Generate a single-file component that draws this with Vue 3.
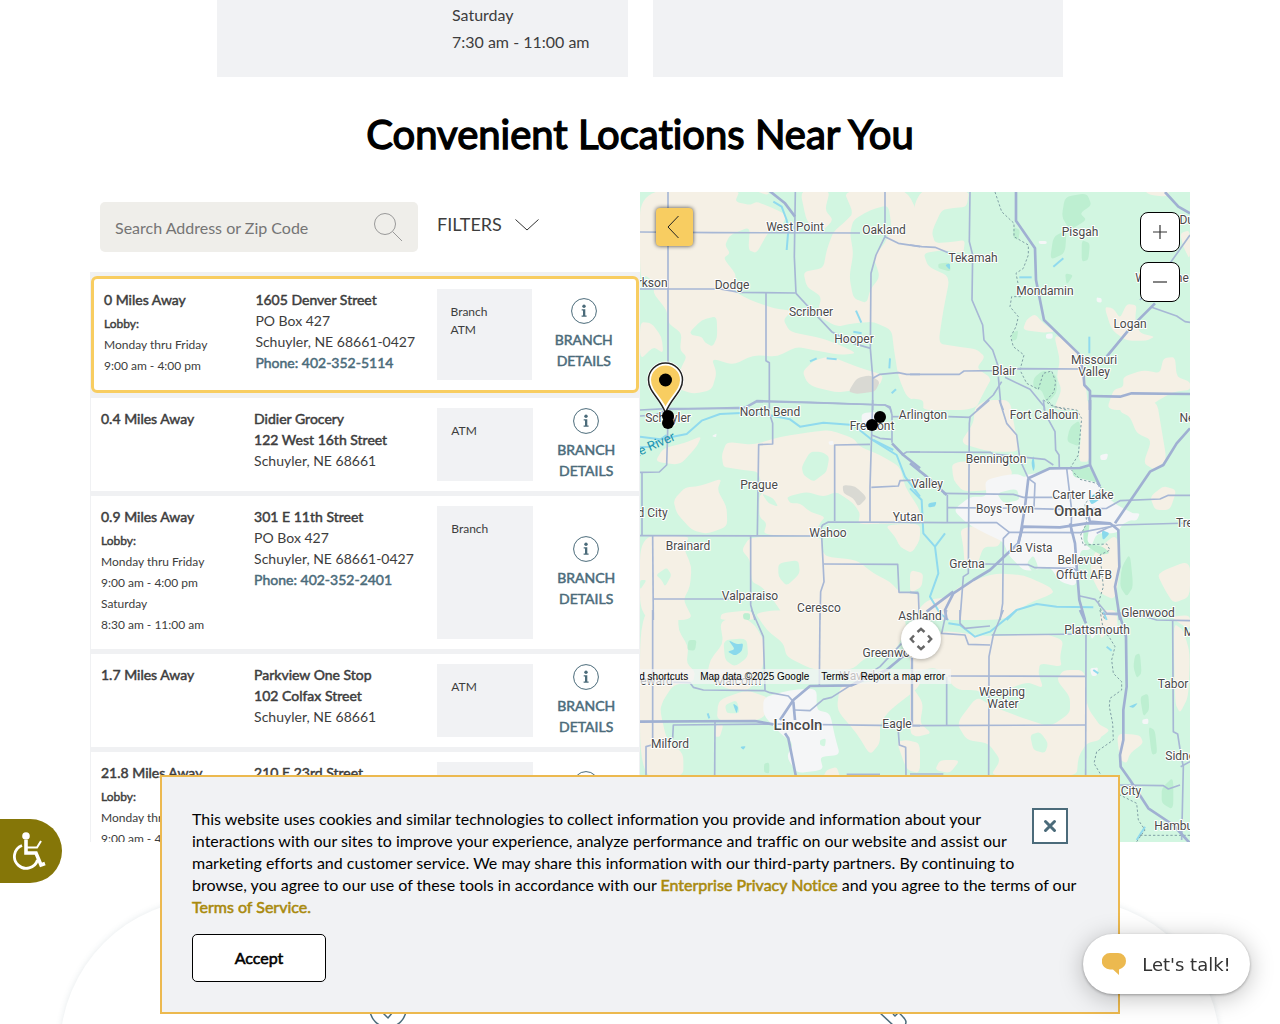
<script setup>
import { ref } from 'vue'

const query = ref('')

const branches = [
  { miles: '0', hours: ['Monday thru Friday', '9:00 am - 4:00 pm'], title: ['1605 Denver Street'], lines: ['PO Box 427', 'Schuyler, NE 68661-0427'], phone: '402-352-5114', services: ['Branch', 'ATM'], active: true },
  { miles: '0.4', hours: [], title: ['Didier Grocery', '122 West 16th Street'], lines: ['Schuyler, NE 68661'], services: ['ATM'] },
  { miles: '0.9', hours: ['Monday thru Friday', '9:00 am - 4:00 pm', 'Saturday', '8:30 am - 11:00 am'], title: ['301 E 11th Street'], lines: ['PO Box 427', 'Schuyler, NE 68661-0427'], phone: '402-352-2401', services: ['Branch'] },
  { miles: '1.7', hours: [], title: ['Parkview One Stop', '102 Colfax Street'], lines: ['Schuyler, NE 68661'], services: ['ATM'] },
  { miles: '21.8', hours: ['Monday thru Friday', '9:00 am - 4:00 pm'], title: ['210 E 23rd Street'], lines: [], services: [] },
]

// Map tiles: every tile is drawn at three units per pixel from its own origin.
// Area kinds: s = farmland, g = grassland, d = forest, u = urban, q = quarry, w = water.
const tiles = [
  {
    x: 640, y: 190,
    areas: [
      ['s', '0,0 300,0 285,35 330,45 350,35 400,55 440,75 425,110 385,125 350,190 325,180 330,110 270,135 255,165 270,190 250,205 290,255 275,300 330,330 400,355 455,362 430,390 450,425 545,445 600,465 650,490 600,495 520,480 470,470 410,500 340,495 280,525 215,505 230,550 215,600 160,612 110,595 120,540 140,500 120,480 125,430 85,400 80,360 40,310 45,280 20,258 0,262'],
      ['s', '0,395 35,400 65,440 70,490 40,470 0,510'],
      ['s', '610,0 840,0 840,640 800,620 775,560 762,480 755,420 700,395 640,400 590,410 530,375 545,320 500,290 490,245 550,235 560,180 580,125 610,100 640,70'],
      ['s', '480,0 570,0 555,60 580,90 540,130 500,95'],
      ['g', '640,90 690,60 745,45 755,110 735,160 700,200 720,260 690,300 680,340 640,325 628,260 640,190 630,130'],
      ['g', '150,425 185,390 230,378 232,440 218,470 195,458 185,440 155,435'],
      ['s', '488,545 520,512 570,498 650,530 730,555 720,585 650,600 590,608 520,590 500,575'],
      ['q', '625,605 650,565 690,555 720,575 705,605 650,612'],
      ['s', '340,0 390,8 380,15'],
    ],
    roads: ['84,6 84,560', '0,126 220,128 660,129', '466,6 463,200 468,310 500,345 575,425 640,460 692,475', '0,297 240,297 300,307 466,309', '378,309 378,512 388,518 388,632', '735,6 735,140 708,195 693,250 691,475 698,560 698,660', '735,140 775,160 840,170', '698,565 720,553 775,548 800,553 840,553', '0,660 80,656 310,655 350,632 510,637 735,645 750,655 755,668'],
    majors: ['385,0 435,40 465,80'],
    rivers: ['400,35 425,50 440,90 445,120 440,180', '510,514 530,505', '560,505 590,508', '648,362 664,398', '640,425 665,430', '750,505 748,535', '768,598 755,610'],
    borders: [],
  },
  {
    x: 910, y: 190,
    areas: [
      ['s', '0,0 178,0 170,50 125,55 95,60 65,125 75,160 130,155 165,150 160,190 100,180 40,190 55,230 120,260 100,360 85,460 130,468 200,478 225,500 200,535 245,565 225,600 195,660 0,660'],
      ['s', '338,420 350,388 375,372 400,400 435,425 400,428'],
      ['s', '432,435 470,450 520,500 525,560 535,660 430,660 455,600 440,560 450,510'],
      ['s', '583,350 610,355 630,385 650,342 680,345 675,390 690,430 735,440 710,452 650,452 605,420'],
      ['s', '640,560 700,540 750,550 760,505 795,500 800,560 840,575 840,600 790,605 730,640 720,660 590,660 610,600 640,590'],
      ['s', '810,130 840,120 840,210 820,170'],
      ['s', '700,0 780,0 770,20 720,15'],
      ['g', '0,625 40,630 40,660 0,660'],
      ['d', '465,20 530,10 545,45 510,70 530,90 480,120 455,80'],
      ['d', '430,140 470,120 465,190 420,210'],
      ['d', '515,150 540,160 535,210 515,215'],
      ['d', '465,250 490,255 470,285'],
      ['d', '370,565 400,540 440,555 440,610 410,640 395,600 370,595'],
      ['d', '310,110 330,120 325,150 310,145'],
      ['d', '305,430 325,420 320,450 305,452'],
      ['d', '85,220 120,218 122,245 85,235'],
      ['w', '105,225 120,220 120,240'],
      ['u', '385,153 410,153 410,162 388,162'],
      ['u', '560,322 575,325 575,338 560,336'],
      ['u', '408,432 428,430 428,446 408,446'],
    ],
    roads: ['180,6 178,155 188,195 186,330 218,405 222,450 248,480 265,530', '0,165 35,170 75,172 115,188', '0,553 148,553 162,543 250,542 330,536 520,537', '265,560 272,640 280,660', '285,562 360,598 403,650 403,660', '275,575 250,615 200,660', '840,135 780,220 690,330', '725,352 800,378 825,395 840,397'],
    majors: ['318,6 318,92 375,175 378,270 402,390 505,490 520,545 523,585 540,603 540,660', '540,618 630,620 665,610 840,612', '765,6 805,50 840,70', '735,340 660,415 590,500'],
    rivers: ['430,230 460,205', '328,262 365,262', '538,440 538,490'],
    borders: ['255,6 275,65 312,100 312,140 355,165 355,195 340,235 318,250 325,285 335,320 305,320 300,350 325,380 318,410 302,440 310,470 342,495 330,540 350,580 385,598 400,550 425,543 437,575 432,605 410,630 430,648 470,660'],
  },
  {
    x: 640, y: 400,
    areas: [
      ['s', '245,165 260,125 340,135 420,110 520,95 570,90 640,115 660,140 720,165 780,200 795,260 840,330 840,370 660,372 650,400 545,410 370,405 380,370 358,350 358,290 370,275 355,215 310,210 275,205 250,200'],
      ['g', '485,200 510,155 545,155 568,170 560,215 540,230 520,245 490,225'],
      ['g', '440,290 500,275 550,290 590,275 640,310 660,340 655,370 690,375 735,370 800,420 840,420 840,585 780,575 740,545 690,520 650,490 665,450 640,430 600,460 550,460 530,430 525,400 540,370 555,350 510,335 480,310 450,310'],
      ['q', '608,255 645,258 682,293 655,320 640,295 610,280'],
      ['s', '735,375 840,370 840,420 815,460 780,440 765,410'],
      ['s', '100,300 135,262 180,258 245,235 232,270 260,320 262,380 200,402 155,390 110,340'],
      ['s', '45,185 70,145 130,130 185,108 170,140 120,195'],
      ['s', '0,408 150,408 130,440 155,500 150,560 130,600 160,660 0,660'],
      ['g', '48,525 80,502 95,525 75,560 65,540'],
      ['g', '0,540 20,540 0,570'],
      ['s', '330,410 545,410 545,450 560,470 650,480 700,520 750,545 780,578 840,582 840,660 440,660 400,600 365,560 335,545 330,480 305,450'],
      ['g', '415,490 475,480 480,520 440,558 415,530'],
      ['s', '245,640 330,630 350,660 240,660'],
      ['g', '365,280 400,295 415,320 385,310'],
      ['u', '665,40 710,35 715,75 665,70'],
      ['d', '310,640 330,640 330,660 310,660'],
      ['u', '565,125 580,122 580,135 568,135'],
      ['u', '215,108 230,100 228,112'],
    ],
    roads: ['0,48 45,45 85,28 320,22 350,5 510,8 735,15 750,20 756,45 756,128', '84,60 80,195 58,216 0,217', '6,217 6,405', '388,0 388,40 398,70 398,132 356,134 352,405', '698,0 696,70 690,260 690,365', '584,363 584,135 690,133', '0,407 530,408 548,375 565,366 840,367', '545,408 552,545 542,575 540,660', '38,408 40,660', '40,597 270,597', '332,408 332,615 345,660', '552,492 773,493 777,577 835,577', '694,262 775,258 780,242 840,240', '785,165 800,156 840,156', '756,50 780,50', '695,105 720,115 755,118'],
    majors: ['756,130 790,165 840,205'],
    rivers: ['0,110 60,118 140,102 185,62 240,42 320,38 370,42 450,58 480,80 550,68 640,75 690,115 770,165 795,230 840,290', '80,105 30,140 0,142', '700,120 760,150'],
    borders: [],
  },
  {
    x: 910, y: 400,
    areas: [
      ['s', '195,20 230,0 300,0 315,90 330,155 240,155 150,130 190,70'],
      ['s', '500,0 540,0 540,185 505,185 515,90'],
      ['s', '630,0 740,0 755,90 770,180 735,210 700,190 725,120 680,100 660,50 630,35'],
      ['s', '125,185 290,180 310,225 250,270 160,275 130,240'],
      ['s', '150,385 240,372 280,405 265,440 220,440 200,500 165,510 160,440'],
      ['s', '145,560 250,520 340,525 420,560 432,580 350,612 290,660 0,660 50,600 120,590'],
      ['s', '0,510 40,520 35,560 0,580'],
      ['s', '720,290 760,258 800,270 780,330 735,330'],
      ['s', '550,460 620,400 632,500 615,600 570,580 540,520'],
      ['s', '740,520 840,480 840,590 790,610 765,570'],
      ['u', '225,240 300,222 355,225 440,205 530,212 560,250 610,310 690,350 640,370 620,400 560,400 540,450 510,450 500,560 450,545 420,500 345,515 295,465 280,425 225,400 170,370 130,330 180,290 230,290'],
      ['g', '300,180 350,190 350,235 300,210'],
      ['g', '260,280 320,265 330,300 280,310'],
      ['d', '480,80 510,60 510,140 470,125'],
      ['d', '485,200 540,200 570,250 530,240 490,230'],
      ['d', '520,380 540,370 530,430 580,440 600,460 570,465 520,430'],
      ['d', '635,500 660,460 670,560 650,590 630,560'],
      ['g', '350,490 370,465 385,500 370,520'],
      ['w', '575,390 600,400 578,422'],
      ['w', '55,310 80,305 75,320 55,322'],
      ['w', '535,295 570,270 580,290 545,315'],
      ['w', '370,165 375,200 370,215 364,190'],
      ['u', '570,165 595,160 590,180 572,180'],
      ['u', '660,340 690,340 680,362 655,360'],
    ],
    roads: ['0,156 240,157 250,162 405,178 430,195', '115,50 180,52 178,70 175,520 160,530 150,660', '178,52 238,0', '268,0 290,70 320,105 330,180 355,235 375,250 372,320', '400,0 405,40 435,95 437,150 447,165 448,205', '0,367 110,368 260,368 298,397 280,415 278,610 270,660', '100,280 310,283 340,292 450,292', '112,285 112,368', '112,323 340,325 460,328 590,325 630,302 750,297 775,286 840,286', '298,397 510,398 625,375 840,369', '220,492 355,494 375,503 490,505 500,512', '470,205 485,330 483,400', '510,588 555,598 590,640 640,640', '560,400 590,385 615,375', '0,577 25,580 28,660'],
    majors: ['0,190 50,230 110,285', '325,430 338,380 450,382 530,370 600,370 625,390 628,500 615,560 630,660', '355,235 345,320 332,400 325,430 240,510 190,540 130,580 105,630 110,660', '355,235 420,205 510,204 540,195 540,0', '540,195 570,260', '615,370 720,215 760,195 800,130 840,85', '480,370 495,430 500,500 508,600 525,660', '130,575 50,635', '530,330 540,365 600,370'],
    rivers: ['0,265 35,300 40,400 75,440 85,520 60,590 90,640 115,660', '105,400 75,440', '290,660 320,630 380,612 440,620 550,622', '580,635 590,660'],
    borders: ['400,0 430,20 500,30 515,55 508,130 505,165 480,205 510,238 560,250 575,265 525,310 530,370 512,405 520,435 590,432 600,450 570,465 580,560 565,610 585,660'],
  },
  {
    x: 640, y: 610,
    areas: [
      ['s', '0,0 115,0 115,60 145,110 140,160 165,185 160,215 100,225 70,270 60,300 80,390 130,430 130,500 0,500'],
      ['s', '240,35 300,15 345,45 375,100 370,170 330,240 270,240 200,205 210,150 250,100'],
      ['g', '250,90 320,85 325,140 285,170 255,150'],
      ['s', '340,0 790,0 800,60 760,130 680,140 635,180 520,180 440,140 430,100 380,60'],
      ['s', '600,225 700,215 840,180 840,230 750,300 720,340 720,400 690,435 650,370 590,300'],
      ['s', '235,270 320,240 390,265 370,330 230,335'],
      ['g', '255,285 290,270 300,310 260,310'],
      ['s', '770,395 800,390 840,400 840,490 800,480'],
      ['s', '230,340 250,345 240,380 225,380'],
      ['u', '370,262 450,240 530,235 530,300 570,310 585,380 600,435 540,440 550,480 470,490 440,440 460,400 420,370 370,315'],
      ['w', '265,90 290,103 310,100 305,125 285,137 262,125 285,118'],
      ['w', '278,280 295,290 290,312'],
      ['w', '300,410 318,408 310,420'],
      ['d', '145,90 170,90 165,122 142,120'],
      ['d', '310,10 330,12 328,30 310,28'],
      ['g', '540,390 558,385 555,410 540,405'],
      ['d', '372,460 388,458 388,490 372,488'],
      ['s', '560,480 590,470 600,500 550,500'],
    ],
    roads: ['38,0 38,390', '335,0 370,80 375,240', '540,10 538,225', '0,215 150,218 160,232 190,240 375,242 390,248 445,258 460,275', '98,385 100,345 400,342 720,346 840,347', '225,333 224,500', '18,500 18,410 35,405', '465,300 510,302 550,268 575,262 720,170 790,95', '775,365 778,405 797,412 798,500', '817,110 817,345', '620,493 720,493'],
    majors: ['0,335 345,333 400,343', '420,330 460,270 510,228 635,226 740,180 800,130', '460,275 465,330', '435,370 445,385 468,500'],
    rivers: ['203,310 208,325'],
    borders: [],
  },
  {
    x: 910, y: 610,
    areas: [
      ['s', '90,60 240,80 400,70 460,90 450,140 455,170 390,160 385,190 400,235 350,215 240,260 200,240 140,240 80,170 0,190 0,100 60,110'],
      ['s', '0,220 40,280 30,340 65,370 20,380 0,370'],
      ['s', '140,340 200,260 250,290 340,325 420,350 480,310 480,260 440,210 460,180 525,180 530,290 580,360 570,390 530,400 505,440 500,500 240,500 272,450 235,400 170,390'],
      ['g', '360,375 390,365 415,400 405,430 370,420'],
      ['s', '530,290 560,340 600,360 575,380 530,400'],
      ['s', '620,370 690,375 700,400 660,430 650,460 630,450'],
      ['s', '75,480 90,450 150,450 120,490'],
      ['s', '790,40 820,60 840,130 835,260 810,310 795,280'],
      ['s', '780,20 840,15 840,60'],
      ['s', '570,0 620,0 625,80 600,60 570,90'],
      ['d', '675,135 690,130 695,190 680,205 670,170'],
      ['d', '690,260 715,250 718,300 700,320'],
      ['d', '715,350 735,360 742,430 725,435'],
      ['d', '755,535 790,500 790,600 755,580'],
      ['u', '540,175 565,172 560,198 545,198'],
      ['u', '540,60 570,55 545,90'],
      ['u', '697,328 715,326 715,342 697,342'],
      ['w', '655,290 685,278 670,294'],
    ],
    roads: ['110,0 95,70 165,75 175,103 240,105', '245,75 530,72', '280,0 250,75 237,140 236,500', '115,198 525,199', '110,200 110,345', '0,347 525,345', '528,60 527,500', '580,12 700,18 740,30 840,32', '788,32 790,365 803,372 812,430 820,470 815,690', '0,492 100,492', '630,525 760,527 775,537 810,525', '812,470 840,455', '150,0 150,40 165,55 240,48', '5,140 5,345'],
    majors: ['625,0 648,80 650,230 640,300 640,390 630,435 632,470 660,510 715,595 790,645 840,700', '510,0 528,40'],
    rivers: ['115,40 150,45 195,80 240,65 290,25 320,0', '550,180 565,190', '590,110 605,122', '705,650 680,690'],
    borders: ['570,0 580,60 600,85 615,110 605,150 610,190 635,215 635,240 600,265 598,290 608,340 610,390 560,425 552,460 570,490 630,555 680,580 685,630 705,660 680,695', '690,676 840,676'],
  },
]

const labels = [
  ['West Point', 795, 227], ['Oakland', 884, 230], ['Tekamah', 973, 258], ['Pisgah', 1080, 232], ['Dun', 1190, 220],
  ['Woodbine', 1162, 278], ['Mondamin', 1045, 291], ['Logan', 1130, 324], ['Clarkson', 644, 283], ['Dodge', 732, 285],
  ['Scribner', 811, 312], ['Hooper', 854, 339], ['Missouri', 1094, 360], ['Valley', 1094, 372], ['Blair', 1004, 371],
  ['North Bend', 770, 412], ['Schuyler', 668, 418], ['Fremont', 872, 426], ['Arlington', 923, 415], ['Fort Calhoun', 1044, 415],
  ['Bennington', 996, 459], ['Prague', 759, 485], ['Valley', 927, 484], ['Carter Lake', 1083, 495], ['Boys Town', 1005, 509],
  ['Yutan', 908, 517], ['David City', 641, 513], ['Wahoo', 828, 533], ['Brainard', 688, 546], ['La Vista', 1031, 548],
  ['Gretna', 967, 564], ['Bellevue', 1080, 560], ['Offutt AFB', 1084, 575], ['Valparaiso', 750, 596], ['Ceresco', 819, 608],
  ['Ashland', 920, 616], ['Glenwood', 1148, 613], ['Plattsmouth', 1097, 630], ['Greenwood', 893, 653], ['Seward', 653, 681],
  ['Malcolm', 738, 681], ['Waverly', 860, 676], ['Weeping', 1002, 692], ['Water', 1003, 704], ['Tabor', 1173, 684],
  ['Eagle', 897, 724], ['Milford', 670, 744], ['Neola', 1195, 418], ['Treynor', 1196, 523], ['Malvern', 1205, 632],
  ['Sidney', 1183, 756], ['Nebraska City', 1104, 791], ['Hamburg', 1179, 826],
]

// Closes an outline and softens each of its corners over a third of the adjoining sides.
function blob(text) {
  const p = text.split(' ').map((s) => s.split(',').map(Number))
  const part = (a, b) => `${a[0] + (b[0] - a[0]) * 0.3} ${a[1] + (b[1] - a[1]) * 0.3}`
  return (
    p
      .map((pt, i) => {
        const prev = p[(i + p.length - 1) % p.length]
        const next = p[(i + 1) % p.length]
        return `${i ? 'L' : 'M'}${part(pt, prev)}Q${pt[0]} ${pt[1]} ${part(pt, next)}`
      })
      .join('') + 'Z'
  )
}
</script>

<template>
  <div class="page">
    <section class="hours">
      <div class="hours-card">
        <p>Saturday<br />7:30 am - 11:00 am</p>
      </div>
      <div class="hours-card"></div>
    </section>

    <h2 class="heading faux">Convenient Locations Near You</h2>

    <section class="locator">
      <div class="finder">
        <form class="search" @submit.prevent>
          <div class="search-box">
            <input v-model="query" type="text" aria-label="Search Address or Zip Code" placeholder="Search Address or Zip Code" />
            <button type="submit" class="plain" aria-label="Search">
              <svg width="30" height="30" viewBox="0 0 30 30" fill="none" stroke="#999"><circle cx="12" cy="12" r="10.500" /><path d="M19.500 19.500L29 29" /></svg>
            </button>
          </div>
          <button type="button" class="plain filters">
            FILTERS
            <svg width="24" height="12" viewBox="0 0 24 12" fill="none" stroke="#333"><path d="M0.500 0.500L12 11L23.500 0.500" /></svg>
          </button>
        </form>

        <ul class="list">
          <li v-for="b in branches" :key="b.miles" class="branch" :class="{ active: b.active }">
            <div class="distance">
              <strong class="faux">{{ b.miles }} Miles Away</strong>
              <div v-if="b.hours.length" class="lobby">
                <strong class="faux">Lobby:</strong>
                <span v-for="h in b.hours" :key="h">{{ h }}</span>
              </div>
            </div>
            <address>
              <strong v-for="t in b.title" :key="t" class="faux">{{ t }}</strong>
              <span v-for="l in b.lines" :key="l">{{ l }}</span>
              <a v-if="b.phone" class="faux" :href="'tel:' + b.phone">Phone: {{ b.phone }}</a>
            </address>
            <div class="services">
              <span v-for="s in b.services" :key="s">{{ s }}</span>
            </div>
            <a class="details faux" href="#details">
              <svg width="26" height="26" viewBox="0 0 26 26"><circle cx="13" cy="13" r="12.400" fill="none" stroke="#4b6b7a" /><circle cx="13" cy="8.300" r="1.700" fill="#4b6b7a" /><path d="M10.700 11.200h3.600v6.300h1.300v1.200h-5v-1.200h1.400v-5.100h-1.300z" fill="#4b6b7a" /></svg>
              <span>BRANCH</span><span>DETAILS</span>
            </a>
          </li>
        </ul>
      </div>

      <div class="map">
        <svg class="canvas" viewBox="640 192 550 650" preserveAspectRatio="xMinYMin slice" role="img" aria-label="Map of branches">
          <rect x="640" y="192" width="550" height="650" fill="#d2f6e1" />
          <g v-for="(t, i) in tiles" :key="'a' + i" :transform="`translate(${t.x} ${t.y}) scale(.33333)`">
            <path v-for="(a, j) in t.areas" :key="j" :d="blob(a[1])" :class="a[0]" />
          </g>
          <g v-for="(t, i) in tiles" :key="'r' + i" :transform="`translate(${t.x} ${t.y}) scale(.33333)`" fill="none" stroke-linejoin="round">
            <polyline v-for="(r, j) in t.rivers" :key="'w' + j" :points="r" class="river" />
            <polyline v-for="(r, j) in t.borders" :key="'b' + j" :points="r" class="border" />
            <polyline v-for="(r, j) in t.roads" :key="'r' + j" :points="r" class="road" />
            <polyline v-for="(r, j) in t.majors" :key="'m' + j" :points="r" class="major" />
          </g>
          <g class="labels">
            <text v-for="(l, i) in labels" :key="i" :x="l[1]" :y="l[2] + 4">{{ l[0] }}</text>
            <text class="city" x="1078" y="516">Omaha</text>
            <text class="city" x="798" y="730">Lincoln</text>
            <text class="water" x="646" y="453" transform="rotate(-24 646 453)">Platte River</text>
          </g>
          <path d="M665.500 411C661 398 649 392 649 380a16.500 16.500 0 0 1 33 0C682 392 670 398 665.500 411z" fill="#f8cd61" stroke="#fff" stroke-width="4" />
          <path d="M665.500 413C660 398 648.500 392 648.500 380a17 17 0 0 1 34 0C682.500 392 671 398 665.500 413z" fill="none" stroke="#222" stroke-width="1.500" />
          <circle cx="665.500" cy="380" r="6.500" /><circle cx="668" cy="416" r="6" /><circle cx="668" cy="423" r="6" />
          <circle cx="880" cy="417" r="6" /><circle cx="872" cy="425" r="6" />
        </svg>

        <button class="back" aria-label="Collapse list"><svg width="12" height="24" viewBox="0 0 12 24" fill="none" stroke="#222"><path d="M11.500 1L1 12L11.500 23" /></svg></button>
        <div class="zoom">
          <button aria-label="Zoom in"><svg width="14" height="14" viewBox="0 0 14 14" stroke="#333" stroke-width="1.200"><path d="M0 7h14M7 0v14" /></svg></button>
          <button aria-label="Zoom out"><svg width="14" height="14" viewBox="0 0 14 14" stroke="#333" stroke-width="1.200"><path d="M0 7h14" /></svg></button>
        </div>
        <button class="pan" aria-label="Map camera controls">
          <svg width="24" height="24" viewBox="0 0 24 24" fill="none" stroke="#666" stroke-width="2.400"><path d="M8.500 5L12 1.800L15.500 5M8.500 19L12 22.200L15.500 19M5 8.500L1.800 12L5 15.500M19 8.500L22.200 12L19 15.500" /></svg>
        </button>
        <div class="credits">
          <span>Keyboard shortcuts</span><span>Map data ©2025 Google</span><span>Terms</span><span>Report a map error</span>
        </div>
      </div>
    </section>

    <section class="products">
      <svg width="38" height="38" viewBox="0 0 38 38" fill="none" stroke="#4b6b7a" stroke-width="1.500"><circle cx="19" cy="19" r="18" /><path d="M10 19L19 28L28 17" /></svg>
      <svg width="38" height="38" viewBox="0 0 38 38" fill="none" stroke="#4b6b7a" stroke-width="1.500"><path d="M5 22L20 36Q31 41 32 32Q32 29 24 22M19 24l2 2l4-4" /></svg>
    </section>

    <button class="access" aria-label="Accessibility options">
      <svg width="33" height="38" viewBox="0 0 33 38" fill="none" stroke="#fff">
        <circle cx="13" cy="4" r="3.800" fill="#fff" stroke="none" />
        <path d="M13 8V21H23L28 33L32 31.500" stroke-width="3.600" />
        <path d="M13 15.500H24L28 9" stroke-width="2" />
        <path d="M9 13.500A11.800 11.800 0 1 0 24.500 28" stroke-width="2.800" />
      </svg>
    </button>

    <aside class="cookies">
      <button class="close" aria-label="Close"><svg width="14" height="14" viewBox="0 0 14 14" stroke="#4b6b7a" stroke-width="3" stroke-linecap="round"><path d="M2.500 2.500L11.500 11.500M11.500 2.500L2.500 11.500" /></svg></button>
      <p>
        This website uses cookies and similar technologies to collect information you provide and information about your
        interactions with our sites to improve your experience, analyze performance and traffic on our website and assist our
        marketing efforts and customer service. We may share this information with our third-party partners. By continuing to
        browse, you agree to our use of these tools in accordance with our <a class="faux" href="#privacy">Enterprise Privacy Notice</a>
        and you agree to the terms of our <a class="faux" href="#terms">Terms of Service.</a>
      </p>
      <button class="accept faux">Accept</button>
    </aside>

    <button class="chat">
      <svg width="24" height="22" viewBox="0 0 24 22" fill="#ecb94f"><path d="M8 0h8a8 8 0 0 1 8 8q0 6-7 8.500V22L11 16.500H8A8 8 0 0 1 8 0z" /></svg>
      Let's talk!
    </button>
  </div>
</template>

<style>
body {
  margin: 0;
}
</style>

<style scoped>
.page {
  height: 100vh;
  overflow: hidden;
  background: #fff;
  color: #3d3d3d;
  font-family: Lato, sans-serif;
  font-size: 14px;
  line-height: 21px;
  font-variant-ligatures: none;
}
* {
  box-sizing: border-box;
}
button {
  font: inherit;
  font-variant-ligatures: none;
  color: inherit;
  padding: 0;
  display: flex;
  align-items: center;
  justify-content: center;
}
.plain {
  border: 0;
  background: none;
}
svg {
  display: block;
  flex: none;
}
.faux {
  font-weight: 400;
  -webkit-text-stroke: 0.035em currentColor;
}
.hours {
  display: flex;
  gap: 25px;
  max-width: 846px;
  margin: 0 auto;
}
.hours-card {
  flex: 1;
  background: #f1f2f4;
  padding: 1px 38px 22px;
  display: flex;
  justify-content: flex-end;
}
.hours-card p {
  margin: 0;
  font-size: 16px;
  line-height: 27px;
}
.heading {
  margin: 33px 0 34px;
  color: #000;
  font-size: 40px;
  line-height: 48px;
  text-align: center;
}
.locator {
  display: flex;
  max-width: 1100px;
  height: 650px;
  margin: 0 auto;
  overflow: hidden;
}
.finder,
.map {
  flex: 1;
  min-width: 0;
}
.search {
  display: flex;
  gap: 19px;
  padding: 10px 10px 20px;
}
.search-box {
  display: flex;
  align-items: center;
  flex: 0 0 60%;
  height: 50px;
  padding: 0 15px;
  border-radius: 5px;
  background: #efeeea;
}
.search-box input {
  flex: 1;
  min-width: 0;
  padding: 0;
  border: 0;
  outline: 0;
  background: none;
  font: inherit;
  font-size: 16px;
}
.search-box input::placeholder {
  color: #757575;
}
.filters {
  gap: 13px;
  height: 45px;
  font-size: 18px;
}
.list {
  display: flex;
  flex-direction: column;
  gap: 5px;
  margin: 0;
  padding: 4px 1px 5px;
  list-style: none;
  background: #f0f1f3;
}
.branch {
  display: grid;
  grid-template-columns: 29% 34.7% 18.2% 1fr;
  min-height: 93px;
  padding: 10px;
  background: #fff;
}
.branch.active {
  border: 3px solid #f8cd61;
  border-radius: 6px;
}
.distance,
address,
.lobby,
.services {
  display: flex;
  flex-direction: column;
  align-items: flex-start;
}
address {
  font-style: normal;
}
address a,
.details {
  color: #4b6b7a;
  text-decoration: none;
}
.lobby {
  padding: 3px 0 4px;
  font-size: 12px;
}
.services {
  padding: 14px;
  background: #f1f2f4;
  font-size: 12px;
  line-height: 18px;
}
.details {
  display: flex;
  flex-direction: column;
  align-items: center;
  justify-content: center;
  padding-left: 10px;
}
.details svg {
  margin-bottom: 5px;
}
.map {
  position: relative;
  overflow: hidden;
}
.canvas {
  width: 100%;
  height: 100%;
}
.s { fill: #f5f0e5; }
.g { fill: #d2f6e1; }
.d { fill: #bdefd1; }
.u { fill: #f5f6f7; }
.q { fill: #d9d9d3; }
.w { fill: #8ad9ec; }
.river { stroke: #90daee; stroke-width: 6; }
.border { stroke: #7f9fa5; stroke-width: 3; stroke-dasharray: 7 6; }
.road { stroke: #a7b7d5; stroke-width: 5; }
.major { stroke: #a0b0d2; stroke-width: 8; }
.labels text {
  fill: #4a4a4a;
  stroke: #fff;
  stroke-width: 2px;
  stroke-linejoin: round;
  paint-order: stroke;
  text-anchor: middle;
  font: 12px Roboto, sans-serif;
}
.labels .city {
  font-size: 15px;
  font-weight: 500;
}
.labels .water {
  fill: #1e93ad;
  stroke: none;
  font-size: 13px;
}
.back,
.zoom,
.pan,
.credits {
  position: absolute;
}
.back {
  left: 16px;
  top: 16px;
  width: 37px;
  height: 38px;
  padding-right: 3px;
  border: 0;
  border-radius: 4px;
  background: #f8cd61;
  box-shadow: 0 0 4px rgba(0, 0, 0, 0.7);
}
.zoom {
  top: 20px;
  right: 10px;
  display: flex;
  flex-direction: column;
  gap: 10px;
}
.zoom button {
  width: 40px;
  height: 40px;
  border: 1px solid #000;
  border-radius: 8px;
  background: #fff;
}
.pan {
  left: 261px;
  top: 427px;
  width: 40px;
  height: 40px;
  border: 0;
  border-radius: 50%;
  background: #fff;
  box-shadow: 0 1px 4px rgba(0, 0, 0, 0.3);
}
.credits {
  left: 0;
  top: 477px;
  width: 311px;
  height: 15px;
  padding-right: 6px;
  display: flex;
  justify-content: flex-end;
  gap: 12px;
  overflow: hidden;
  background: rgba(245, 245, 245, 0.7);
  color: #000;
  font: 10px/15px "Liberation Sans", sans-serif;
  white-space: nowrap;
}
.products {
  display: flex;
  justify-content: space-around;
  height: 400px;
  margin: 57px 60px 0;
  padding: 91px 75px 0;
  border-radius: 150px;
  box-shadow: 0 0 6px rgba(75, 107, 122, 0.15);
}
.access {
  position: fixed;
  left: 0;
  top: 819px;
  width: 62px;
  height: 64px;
  padding-right: 4px;
  border: 0;
  border-radius: 0 32px 32px 0;
  background: #857608;
}
.cookies {
  position: fixed;
  bottom: 10px;
  left: 12.5%;
  width: 75%;
  padding: 31px 38px 30px 30px;
  border: 2px solid #ecb94f;
  background: #f1f2f4;
  color: #000;
  font-size: 16px;
  line-height: 22px;
}
.cookies p {
  margin: 0 0 16px;
}
.cookies a {
  color: #a98a0d;
  text-decoration: none;
}
.close {
  float: right;
  width: 36px;
  height: 36px;
  margin: 0 12px 10px 10px;
  border: 2px solid #4b6b7a;
  background: #fff;
}
.accept {
  width: 134px;
  height: 48px;
  border: 1px solid #000;
  border-radius: 5px;
  background: #fff;
}
.chat {
  position: fixed;
  right: 30px;
  bottom: 30px;
  width: 167px;
  height: 60px;
  gap: 16px;
  border: 0;
  border-radius: 30px;
  background: #fff;
  color: #333;
  font: 18px "DejaVu Sans", sans-serif;
  box-shadow: 0 4px 24px rgba(0, 0, 0, 0.25), 0 1px 3px rgba(0, 0, 0, 0.3);
}
</style>
